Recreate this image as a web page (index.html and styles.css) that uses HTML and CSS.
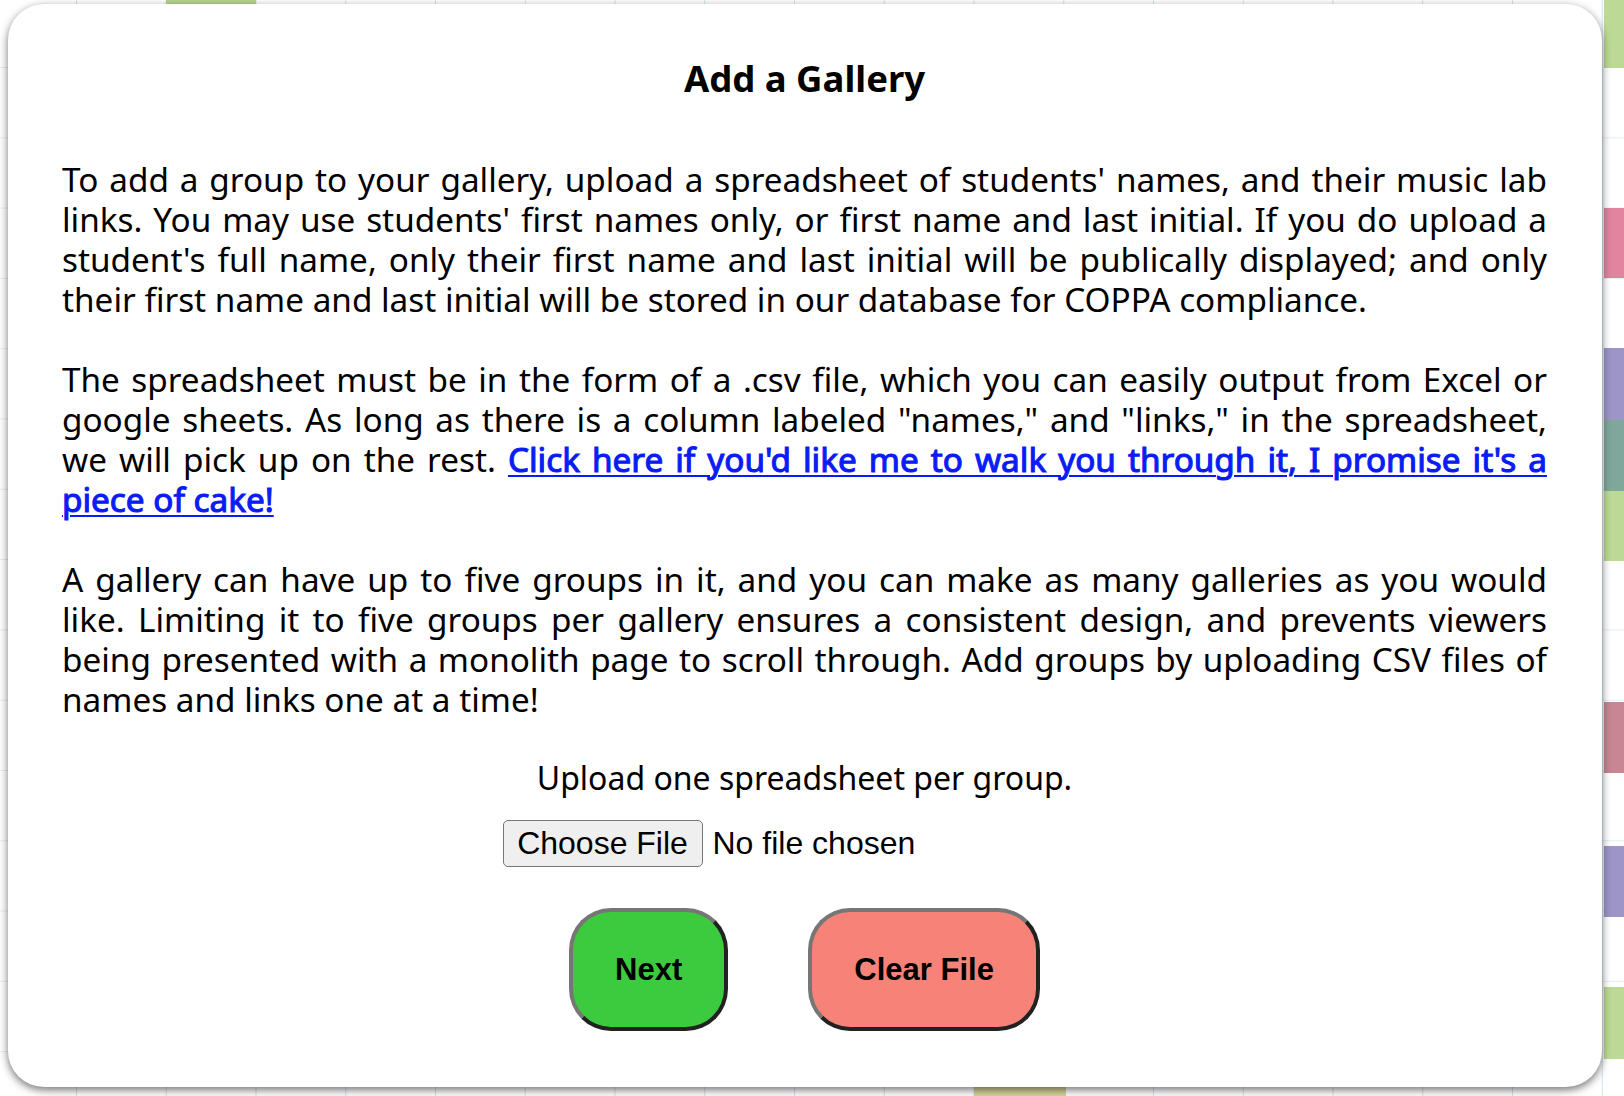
FILE: index.html
```html
<!DOCTYPE html>
<html lang="en">
<head>
<meta charset="utf-8">
<title>Add a Gallery</title>
<link rel="stylesheet" href="styles.css">
</head>
<body>
<div class="backdrop">
  <span class="blk blk-top-green"></span>
  <span class="blk blk-bottom-olive"></span>
  <span class="blk side green" style="top:0;height:68px"></span>
  <span class="blk side pink" style="top:208px;height:70px"></span>
  <span class="blk side purple" style="top:348px;height:72px"></span>
  <span class="blk side teal" style="top:420px;height:71px"></span>
  <span class="blk side green" style="top:491px;height:70px"></span>
  <span class="blk side rose" style="top:702px;height:71px"></span>
  <span class="blk side purple" style="top:846px;height:71px"></span>
  <span class="blk side green" style="top:987px;height:72px"></span>
</div>
<main class="modal">
  <h2 class="title">Add a Gallery</h2>
  <p class="intro">To add a group to your gallery, upload a spreadsheet of students' names, and their music lab links. You may use students' first names only, or first name and last initial. If you do upload a student's full name, only their first name and last initial will be publically displayed; and only their first name and last initial will be stored in our database for COPPA compliance.<br><br>The spreadsheet must be in the form of a .csv file, which you can easily output from Excel or google sheets. As long as there is a column labeled "names," and "links," in the spreadsheet, we will pick up on the rest. <a class="walk" href="#">Click here if you'd like me to walk you through it, I promise it's a piece of cake!</a><br><br>A gallery can have up to five groups in it, and you can make as many galleries as you would like. Limiting it to five groups per gallery ensures a consistent design, and prevents viewers being presented with a monolith page to scroll through. Add groups by uploading CSV files of names and links one at a time!</p>
  <p class="upload">Upload one spreadsheet per group.</p>
  <div class="file-row">
    <div class="file-input">
      <span class="file-btn">Choose File</span>
      <span class="file-name">No file chosen</span>
    </div>
  </div>
  <div class="actions">
    <button class="btn btn-next" type="button">Next</button>
    <button class="btn btn-clear" type="button">Clear File</button>
  </div>
</main>
</body>
</html>
```

FILE: styles.css
```css
html, body {
  margin: 0;
  padding: 0;
}

body {
  width: 1624px;
  height: 1096px;
  overflow: hidden;
  position: relative;
  background-color: #ffffff;
  background-image:
    linear-gradient(to right, #cfe4f0 1px, transparent 1px),
    linear-gradient(to bottom, #e2eef5 1px, transparent 1px);
  background-size: 89.75px 100%, 100% 70.3px;
  background-position: 76px 0, 0 67px;
  font-family: "Noto Sans", "Open Sans", sans-serif;
  color: #000;
}

.backdrop {
  position: absolute;
  inset: 0;
  z-index: 0;
}

.blk {
  position: absolute;
  display: block;
}

.blk-top-green {
  left: 166px;
  top: 0;
  width: 90px;
  height: 10px;
  background: #b6d38e;
}

.blk-bottom-olive {
  left: 974px;
  top: 1080px;
  width: 92px;
  height: 16px;
  background: #d6d59a;
}

.side {
  left: 1604px;
  width: 20px;
}

.green { background: #bcd995; }
.pink { background: #e2849f; }
.rose { background: #c88593; }
.purple { background: #9d94c8; }
.teal { background: #7fa79c; }

.modal {
  position: relative;
  z-index: 1;
  box-sizing: border-box;
  width: 1594px;
  margin: 4px 0 0 8px;
  padding: 54px 55px 56px 54px;
  background: #ffffff;
  border-radius: 36px;
  box-shadow: 0 3px 9px rgba(0, 0, 0, 0.55);
}

.title {
  margin: 0 0 61px;
  text-align: center;
  font-size: 36.5px;
  line-height: 40px;
  font-weight: 700;
}

.intro {
  margin: 0;
  font-size: 33.3px;
  line-height: 40px;
  text-align: justify;
}

.walk {
  color: #0a1cf6;
  font-weight: 400;
  -webkit-text-stroke: 1.1px #0a1cf6;
  text-decoration: underline;
  text-decoration-thickness: 2px;
  text-underline-offset: 3px;
}

.upload {
  margin: 39px 0 0;
  text-align: center;
  font-size: 32px;
  line-height: 40px;
}

.file-row {
  margin-top: 22px;
  display: flex;
  justify-content: center;
}

.file-input {
  width: 604px;
  display: flex;
  align-items: center;
  gap: 10px;
  font-family: "Liberation Sans", Arial, sans-serif;
  font-size: 32px;
}

.file-btn {
  box-sizing: border-box;
  width: 200px;
  height: 47px;
  display: flex;
  align-items: center;
  justify-content: center;
  background: #efefef;
  border: 1.5px solid #767676;
  border-radius: 5px;
  color: #000;
}

.actions {
  margin-top: 41px;
  display: flex;
  justify-content: center;
  gap: 80px;
}

.btn {
  box-sizing: border-box;
  height: 123px;
  padding: 0 42px;
  font-family: "Liberation Sans", Arial, sans-serif;
  font-size: 31px;
  font-weight: 700;
  color: #000;
  border-width: 4px;
  border-style: solid;
  border-color: #767676 #222222 #222222 #767676;
  border-radius: 42px;
  cursor: pointer;
}

.btn-next {
  background: #3ccb3f;
}

.btn-clear {
  background: #f78378;
}
```
